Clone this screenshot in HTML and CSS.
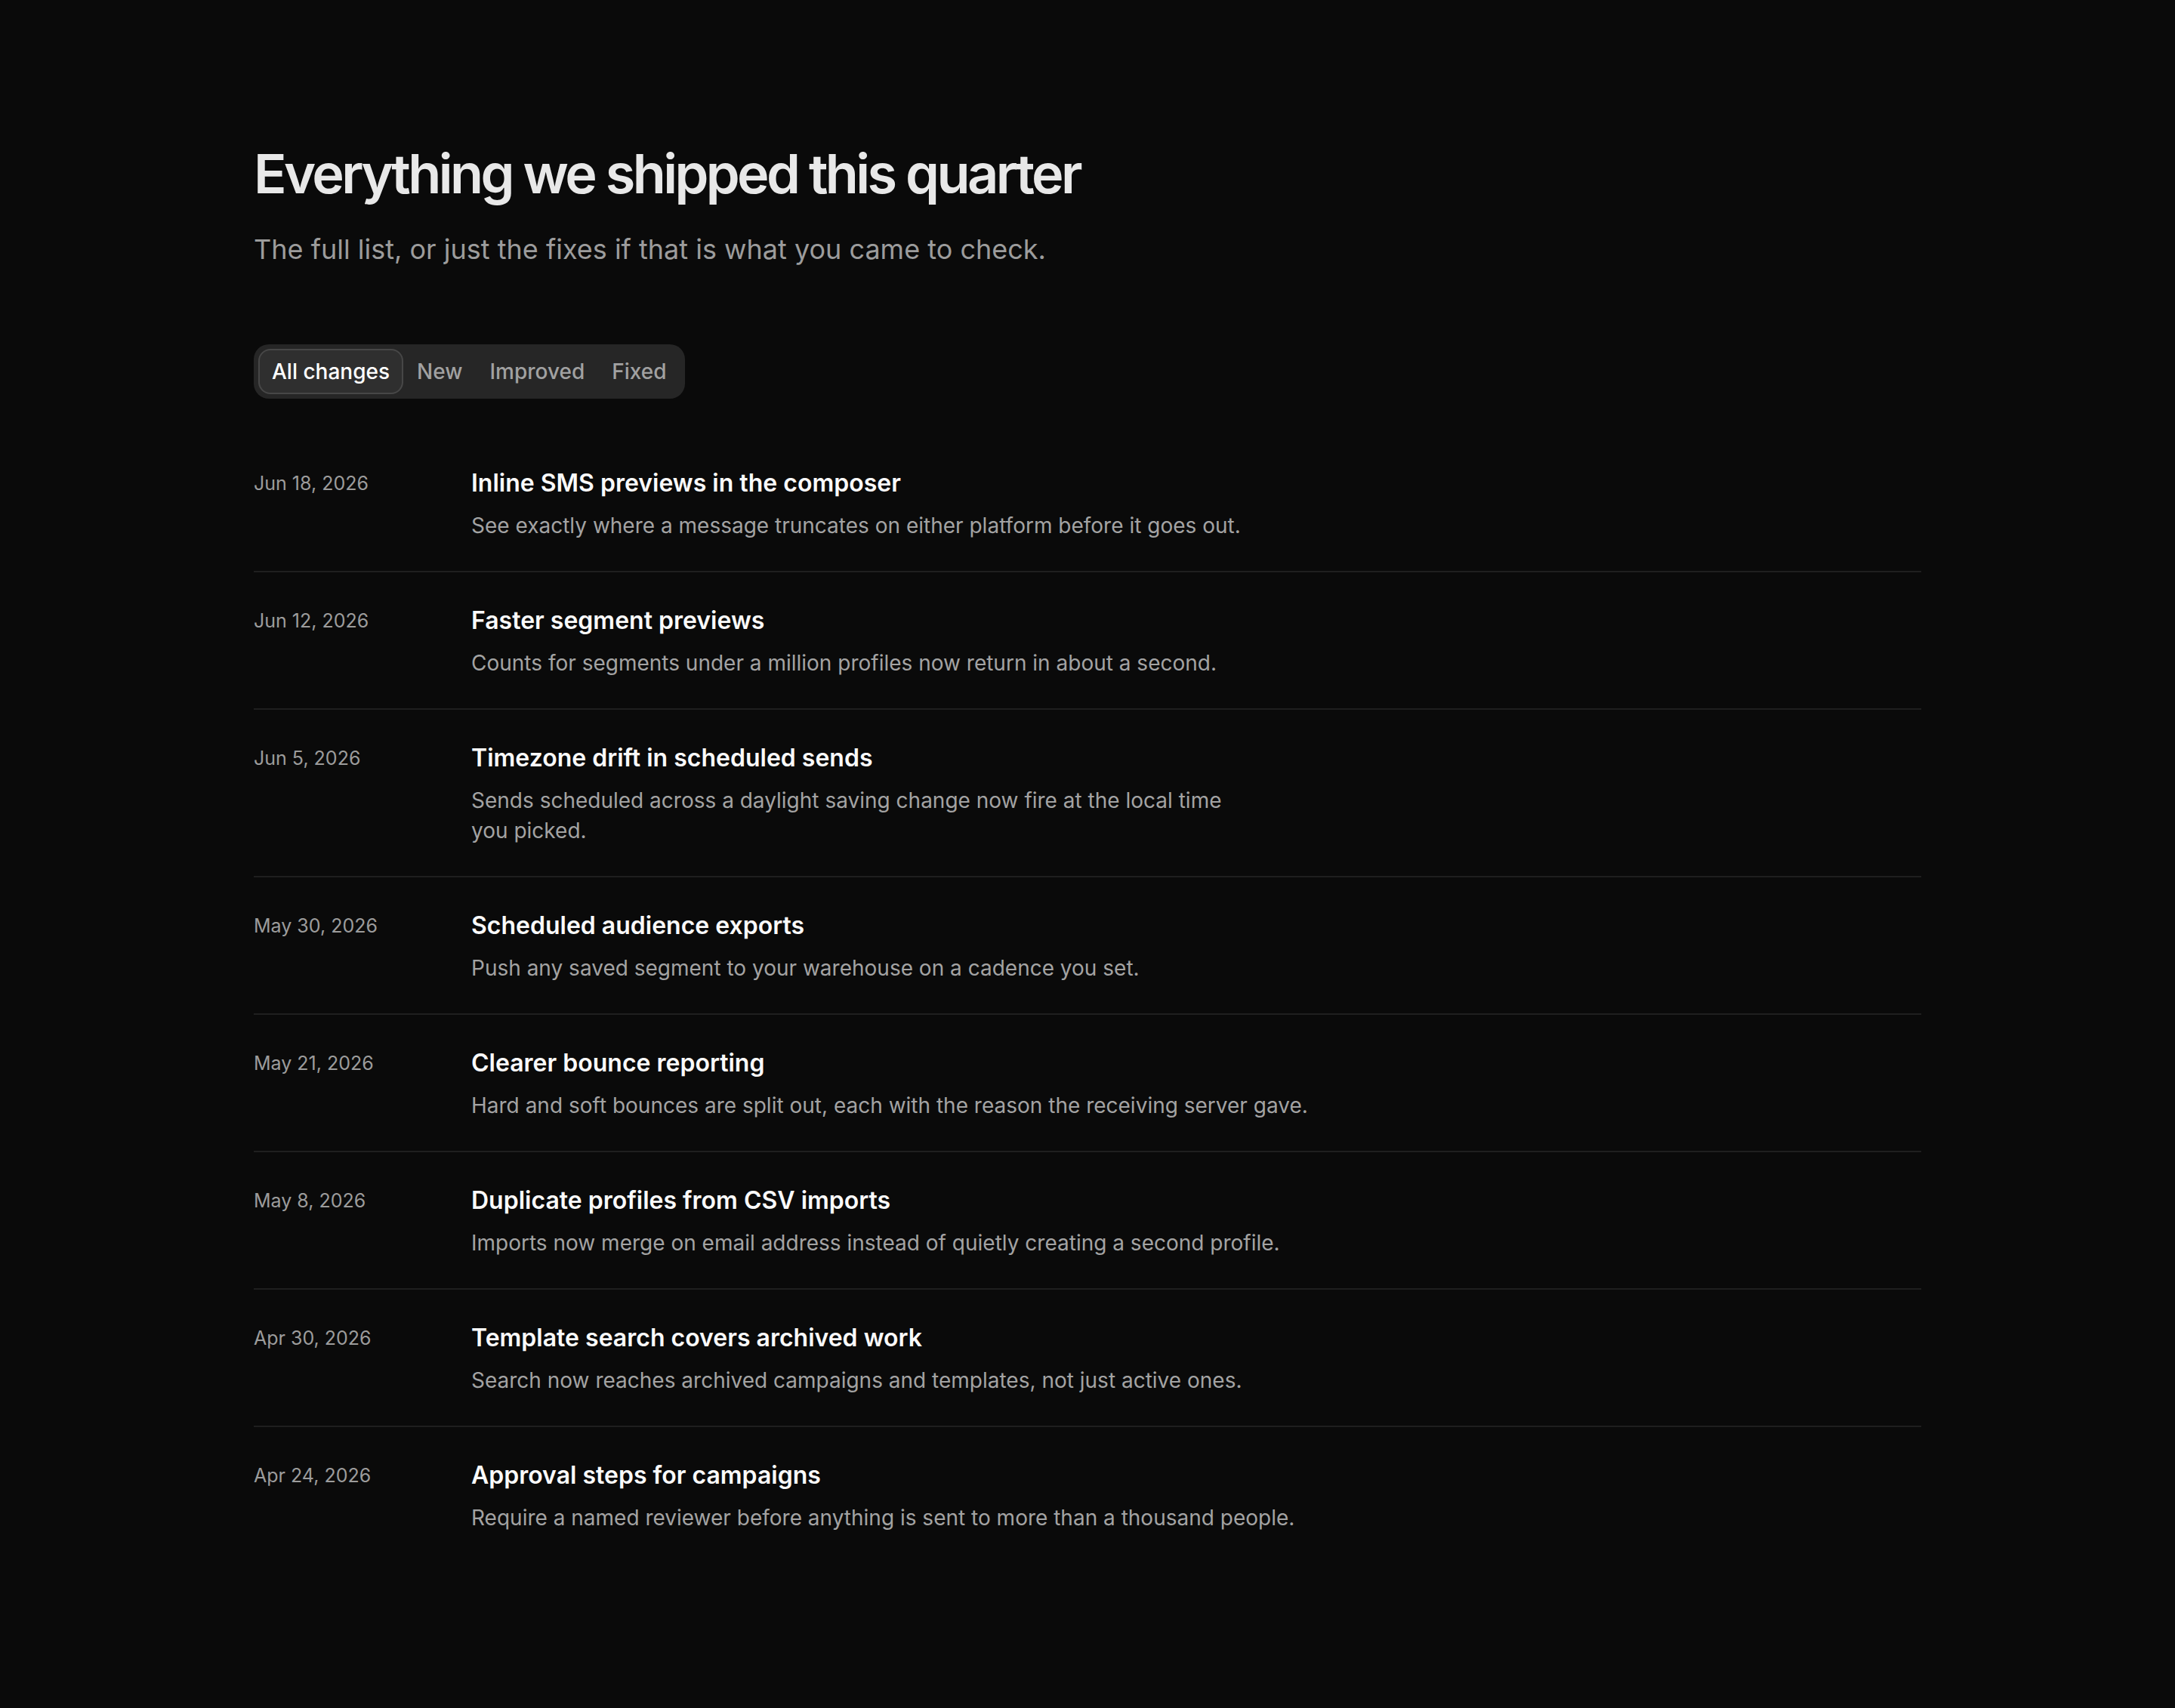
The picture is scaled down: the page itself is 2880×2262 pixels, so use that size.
FILE: index.html
```html
<!DOCTYPE html>
<html lang="en">
    <head>
        <meta charset="UTF-8">
        <meta name="viewport" content="width=device-width, initial-scale=1.0">
        <title>Changelog</title>
        <link rel="stylesheet" href="styles.css">
    </head>
    <body>
        <main class="page">
            <header class="intro">
                <h1 class="headline">Everything we shipped this quarter</h1>
                <p class="lede">The full list, or just the fixes if that is what you came to check.</p>
            </header>

            <div class="filters">
                <button class="filter is-active">All changes</button>
                <button class="filter">New</button>
                <button class="filter">Improved</button>
                <button class="filter">Fixed</button>
            </div>

            <ol class="log">
                <li class="entry">
                    <time class="entry-date">Jun 18, 2026</time>
                    <div class="entry-body">
                        <h2 class="entry-title">Inline SMS previews in the composer</h2>
                        <p class="entry-text">See exactly where a message truncates on either platform before it goes out.</p>
                    </div>
                </li>
                <li class="entry">
                    <time class="entry-date">Jun 12, 2026</time>
                    <div class="entry-body">
                        <h2 class="entry-title">Faster segment previews</h2>
                        <p class="entry-text">Counts for segments under a million profiles now return in about a second.</p>
                    </div>
                </li>
                <li class="entry">
                    <time class="entry-date">Jun 5, 2026</time>
                    <div class="entry-body">
                        <h2 class="entry-title">Timezone drift in scheduled sends</h2>
                        <p class="entry-text">Sends scheduled across a daylight saving change now fire at the local time you picked.</p>
                    </div>
                </li>
                <li class="entry">
                    <time class="entry-date">May 30, 2026</time>
                    <div class="entry-body">
                        <h2 class="entry-title">Scheduled audience exports</h2>
                        <p class="entry-text">Push any saved segment to your warehouse on a cadence you set.</p>
                    </div>
                </li>
                <li class="entry">
                    <time class="entry-date">May 21, 2026</time>
                    <div class="entry-body">
                        <h2 class="entry-title">Clearer bounce reporting</h2>
                        <p class="entry-text">Hard and soft bounces are split out, each with the reason the receiving server gave.</p>
                    </div>
                </li>
                <li class="entry">
                    <time class="entry-date">May 8, 2026</time>
                    <div class="entry-body">
                        <h2 class="entry-title">Duplicate profiles from CSV imports</h2>
                        <p class="entry-text">Imports now merge on email address instead of quietly creating a second profile.</p>
                    </div>
                </li>
                <li class="entry">
                    <time class="entry-date">Apr 30, 2026</time>
                    <div class="entry-body">
                        <h2 class="entry-title">Template search covers archived work</h2>
                        <p class="entry-text">Search now reaches archived campaigns and templates, not just active ones.</p>
                    </div>
                </li>
                <li class="entry">
                    <time class="entry-date">Apr 24, 2026</time>
                    <div class="entry-body">
                        <h2 class="entry-title">Approval steps for campaigns</h2>
                        <p class="entry-text">Require a named reviewer before anything is sent to more than a thousand people.</p>
                    </div>
                </li>
            </ol>
        </main>
    </body>
</html>
```

FILE: styles.css
```css
body {
    margin: 0;
    background-color: #0a0a0a;
    color: #ededed;
    font-family: Inter, "Noto Sans", sans-serif;
}

.page {
    max-width: 2208px;
    margin: 0 auto;
    padding: 186px 0 80px;
}

.headline {
    margin: 0;
    font-size: 72px;
    line-height: 88px;
    font-weight: 600;
    letter-spacing: -0.05em;
    color: #e8e8e8;
}

.lede {
    margin: 28px 0 0;
    font-size: 36px;
    line-height: 56px;
    color: #9c9c9c;
}

.filters {
    display: inline-flex;
    margin-top: 98px;
    padding: 6px;
    background-color: #262626;
    border-radius: 20px;
}

.filter {
    font-family: inherit;
    font-size: 28px;
    font-weight: 500;
    line-height: 56px;
    padding: 0 16px;
    border: 2px solid transparent;
    border-radius: 16px;
    background: none;
    color: #a1a1a1;
    cursor: pointer;
}

.filter.is-active {
    background-color: #2f2f2f;
    border-color: #474747;
    color: #fff;
}

.log {
    list-style: none;
    margin: 48px 0 0;
    padding: 0;
}

.entry {
    display: grid;
    grid-template-columns: 288px 1fr;
    padding: 40px 0;
    border-bottom: 2px solid #1f1f1f;
}

.entry:last-child {
    border-bottom: none;
}

.entry-date {
    font-size: 25px;
    line-height: 48px;
    color: #9c9c9c;
}

.entry-title {
    margin: 0 0 12px;
    font-size: 32px;
    line-height: 48px;
    font-weight: 600;
    color: #fafafa;
}

.entry-text {
    margin: 0;
    max-width: 1120px;
    font-size: 28px;
    line-height: 40px;
    color: #a3a3a3;
    text-wrap: pretty;
}
```
